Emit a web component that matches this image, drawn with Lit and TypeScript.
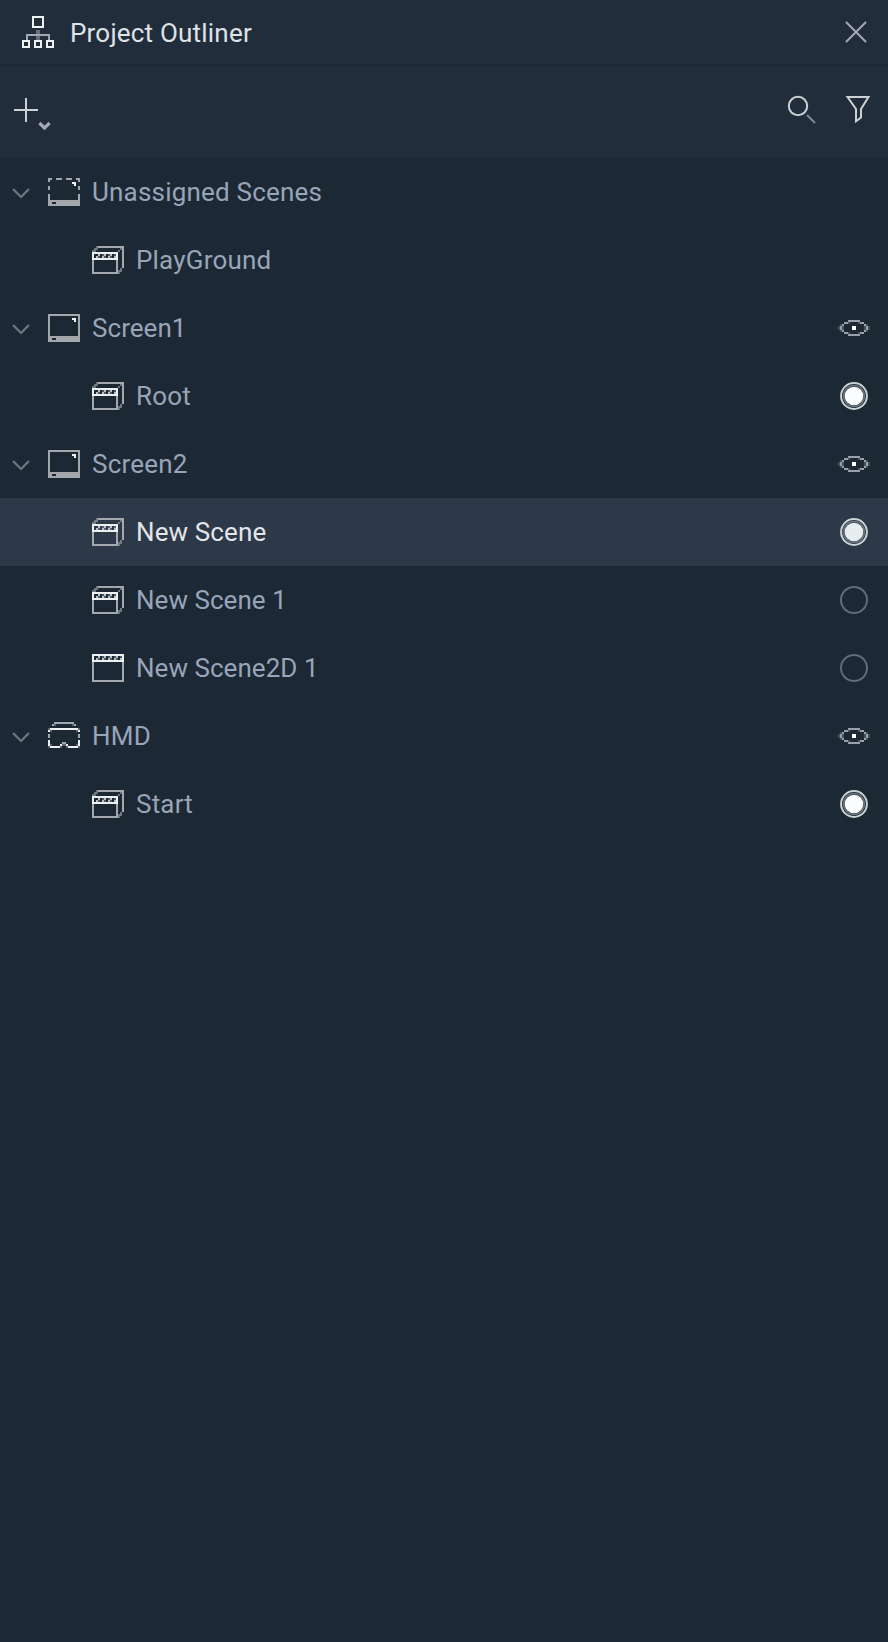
import { LitElement, html, css, svg } from "lit";
import { customElement, property } from "lit/decorators.js";
import { classMap } from "lit/directives/class-map.js";

type Kind = "unassigned" | "screen" | "hmd" | "scene3d" | "scene2d";
interface Row { name: string; kind: Kind; mark?: "eye" | "on" | "off"; selected?: boolean; wide?: boolean }

const rows: Row[] = [
  { name: "Unassigned Scenes", kind: "unassigned", wide: true },
  { name: "PlayGround", kind: "scene3d", wide: true },
  { name: "Screen1", kind: "screen", mark: "eye" },
  { name: "Root", kind: "scene3d", mark: "on", wide: true },
  { name: "Screen2", kind: "screen", mark: "eye", wide: true },
  { name: "New Scene", kind: "scene3d", mark: "on", selected: true },
  { name: "New Scene 1", kind: "scene3d", mark: "off" },
  { name: "New Scene2D 1", kind: "scene2d", mark: "off" },
  { name: "HMD", kind: "hmd", mark: "eye", wide: true },
  { name: "Start", kind: "scene3d", mark: "on", wide: true },
];

const G = "#a3a8ad";
const W = "#eef1f2";

// Shapes on a 16x14 cell grid, drawn at two pixels per cell.
const screenBase = svg`
  <path fill=${W} d="M12 2h2v2h-1v-1h-1z"/>
  <path fill=${G} fill-rule="evenodd" d="M0 11h16v3h-16z M2 12v1h2v-1z"/>`;

const kinds = {
  unassigned: svg`${screenBase}
    <path fill=${G} d="M0 0h2v1h-1v1h-1z M4 0h3v1h-3z M9 0h3v1h-3z M14 0h2v2h-1v-1h-1z M0 4h1v2h-1z M15 4h1v2h-1z M0 8h1v3h-1z M15 8h1v3h-1z"/>`,
  screen: svg`${screenBase}
    <path fill=${G} fill-rule="evenodd" d="M0 0h16v11h-16z M1 1v10h14v-10z"/>`,
  scene3d: svg`
    <path fill=${G} d="M3 0h13v11h-1v-10h-12z M0 7h1v6h11v-6h1v7h-13z"/>
    <path fill=${G} opacity=".6" d="M2 0h1v1h-1z M1 1h1v1h-1z M2 1h1v1h-1z M0 2h1v1h-1z M1 2h1v1h-1z M14 1h1v1h-1z M13 2h1v1h-1z M14 11h1v1h-1z M14 12h1v1h-1z M13 12h1v1h-1z M13 13h1v1h-1z"/>
    <path fill=${W} fill-rule="evenodd" d="M0 3h13v4h-13z M1 4v2h11v-2z"/>
    <path fill=${W} opacity=".75" d="M3 4h1v1h-1z M2 5h1v1h-1z M6 4h1v1h-1z M5 5h1v1h-1z M9 4h1v1h-1z M8 5h1v1h-1z M11 5h1v1h-1z"/>
    <path fill=${W} opacity=".25" d="M3 5h1v1h-1z M5 4h1v1h-1z M6 5h1v1h-1z M8 4h1v1h-1z M9 5h1v1h-1z M11 4h1v1h-1z"/>`,
  scene2d: svg`
    <path fill=${G} d="M0 4h1v9h14v-9h1v10h-16z"/>
    <path fill=${W} fill-rule="evenodd" d="M0 0h16v4h-16z M1 1v2h14v-2z"/>
    <path fill=${W} opacity=".75" d="M3 1h1v1h-1z M2 2h1v1h-1z M6 1h1v1h-1z M5 2h1v1h-1z M9 1h1v1h-1z M8 2h1v1h-1z M12 1h1v1h-1z M11 2h1v1h-1z M14 2h1v1h-1z"/>
    <path fill=${W} opacity=".25" d="M3 2h1v1h-1z M5 1h1v1h-1z M6 2h1v1h-1z M8 1h1v1h-1z M9 2h1v1h-1z M11 1h1v1h-1z M12 2h1v1h-1z M14 1h1v1h-1z"/>`,
  hmd: svg`
    <path fill=${G} d="M3 0h10v1h-10z M2 1h1v1h-1z M13 1h1v1h-1z M0 6h1v2h-1z M15 6h1v2h-1z"/>
    <path fill=${G} opacity=".45" d="M3 1h1v1h-1z M12 1h1v1h-1z M0 3h1v1h-1z M15 3h1v1h-1z M1 4h1v1h-1z M14 4h1v1h-1z M1 11h1v1h-1z M14 11h1v1h-1z M0 12h1v1h-1z M15 12h1v1h-1z M7 11h2v1h-2z M6 12h1v1h-1z M9 12h1v1h-1z"/>
    <path fill=${W} d="M1 3h14v1h-14z M0 4h1v1h-1z M15 4h1v1h-1z M0 9h1v3h-1z M15 9h1v3h-1z M1 12h5v1h-5z M10 12h5v1h-5z M6 11h1v1h-1z M9 11h1v1h-1z"/>
    <path fill=${G} d="M7 10h2v1h-2z"/>`,
};

const marks = {
  eye: svg`<g transform="translate(-2 6) scale(2)" shape-rendering="crispEdges">
    <path fill="#99a0a8" d="M5 0h6v1h-6z M3 1h2v1h-2z M11 1h2v1h-2z M2 2h1v1h-1z M13 2h1v1h-1z M1 3h1v2h-1z M14 3h1v2h-1z M2 5h1v1h-1z M13 5h1v1h-1z M3 6h2v1h-2z M11 6h2v1h-2z M5 7h6v1h-6z"/>
    <path fill="#99a0a8" opacity=".35" d="M0 3h1v2h-1z M15 3h1v2h-1z M1 2h1v1h-1z M14 2h1v1h-1z M2 3h1v2h-1z M13 3h1v2h-1z M1 5h1v1h-1z M14 5h1v1h-1z M5 1h1v1h-1z M10 1h1v1h-1z M5 6h1v1h-1z M10 6h1v1h-1z"/>
    <path fill="#fff" d="M7 3h2v2h-2z"/></g>`,
  on: svg`<circle cx="14" cy="14" r="12.9" fill="none" stroke="#ccd1d4" stroke-width="2"/><circle cx="14" cy="14" r="10.4" fill="none" stroke="#67727f" stroke-width="1.5"/><circle cx="14" cy="14" r="9.3" class="dot"/>`,
  off: svg`<circle cx="14" cy="14" r="13" fill="none" stroke="#606b78" stroke-width="2"/>`,
};

@customElement("outliner-row")
class OutlinerRow extends LitElement {
  @property({ attribute: false }) row!: Row;
  static styles = css`
    :host { display: block; }
    .row { display: flex; align-items: center; height: 68px; box-sizing: border-box; padding: 0 20px 0 12px; color: #98a5b8; letter-spacing: 0.04px; }
    .row.wide { letter-spacing: 0.2px; }
    .row.selected { background: #2d3848; color: #e2e5e9; letter-spacing: 0.12px; }
    .chevron { width: 18px; height: 10px; margin: 2px 18px 0 0; flex: none; }
    .kind { width: 32px; height: 28px; flex: none; }
    .scene .kind { margin-left: 80px; }
    .name { flex: 1; margin-left: 12px; white-space: pre; }
    .mark { width: 28px; height: 28px; flex: none; overflow: visible; }
    .dot { fill: #fafbfc; }
    .selected .dot { fill: #e8eeef; }
  `;
  render() {
    const r = this.row;
    const scene = r.kind.startsWith("scene");
    return html`<div class=${classMap({ row: true, scene, wide: !!r.wide, selected: !!r.selected })}>
      ${scene ? null : html`<svg class="chevron" viewBox="0 0 18 10"><path d="M1 1L9 9L17 1" fill="none" stroke="#6d7681" stroke-width="2.2"/></svg>`}
      <svg class="kind" viewBox="0 0 16 14" shape-rendering="crispEdges">${kinds[r.kind]}</svg>
      <span class="name">${r.name}</span>
      ${r.mark ? html`<svg class="mark" viewBox="0 0 28 28">${marks[r.mark]}</svg>` : null}
    </div>`;
  }
}

@customElement("app-root")
class AppRoot extends LitElement {
  static styles = css`
    :host { display: flex; flex-direction: column; height: 1642px; background: #1d2835; font: 26px/34px Roboto, sans-serif; }
    svg { display: block; flex: none; }
    .header { display: flex; align-items: center; height: 64px; padding: 0 20px 0 22px; background: #222d3c; margin-bottom: 2px; }
    .title { flex: 1; margin-left: 16px; padding-top: 2px; color: #dfe2e6; letter-spacing: 0.2px; }
    .tools { display: flex; align-items: center; height: 92px; padding: 0 16px 0 14px; background: #222d3c; }
    .spacer { flex: 1; }
    .lens, .filter { margin-bottom: 4px; }
    .filter { margin-left: 28px; }
  `;
  render() {
    return html`
      <div class="header">
        <svg width="32" height="32" viewBox="0 0 16 16" shape-rendering="crispEdges">
          <path fill="#686f79" d="M7 7h2v5h-2z"/>
          <path fill="#a3a8b0" d="M2 9h12v3h-1v-2h-10v2h-1z"/>
          <path fill=${W} fill-rule="evenodd" d="M5 0h6v6h-6z M6 1v4h4v-4z M0 12h4v4h-4z M1 13v2h2v-2z M6 12h4v4h-4z M7 13v2h2v-2z M12 12h4v4h-4z M13 13v2h2v-2z"/>
        </svg>
        <span class="title">Project Outliner</span>
        <svg width="24" height="24" viewBox="0 0 24 24"><path d="M2 2L22 22M22 2L2 22" stroke="#a3a8b2" stroke-width="2"/></svg>
      </div>
      <div class="tools">
        <svg width="40" height="40" viewBox="0 0 40 40">
          <path d="M0 18h24M12 6v24" stroke="#ccd2d2" stroke-width="2"/>
          <path d="M25.400 31l5.100 5 5.100-5" fill="none" stroke="#a3a8b0" stroke-width="3.2"/>
        </svg>
        <span class="spacer"></span>
        <svg class="lens" width="30" height="32" viewBox="0 0 30 32">
          <circle cx="12" cy="12" r="9.200" fill="none" stroke="#ccd2d2" stroke-width="2"/>
          <path d="M21 21L29 29" stroke="#808995" stroke-width="2"/>
        </svg>
        <svg class="filter" width="28" height="32" viewBox="0 0 28 32">
          <path d="M3.500 3h21l-7.500 12v8.500l-5 3.800v-12.300z" fill="none" stroke="#ccd2d2" stroke-width="2"/>
        </svg>
      </div>
      ${rows.map((row) => html`<outliner-row .row=${row}></outliner-row>`)}
    `;
  }
}
